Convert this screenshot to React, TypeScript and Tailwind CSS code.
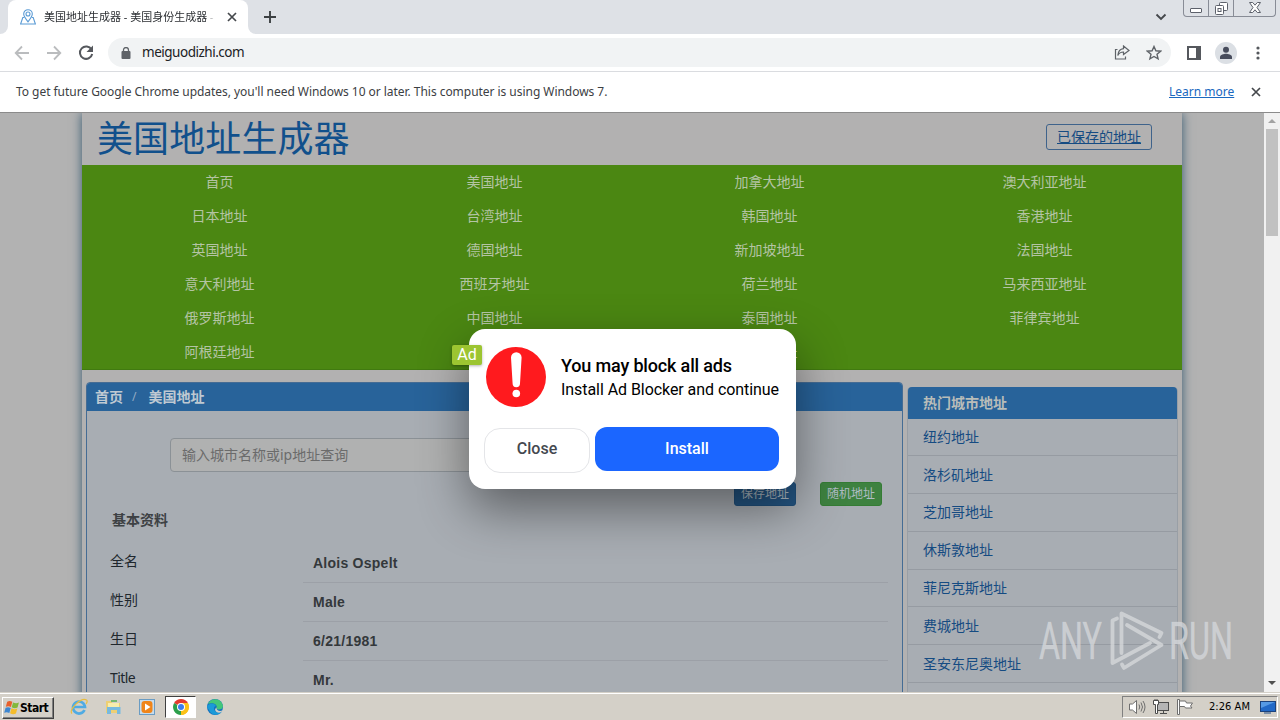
const NAV = [
  "首页", "美国地址", "加拿大地址", "澳大利亚地址",
  "日本地址", "台湾地址", "韩国地址", "香港地址",
  "英国地址", "德国地址", "新加坡地址", "法国地址",
  "意大利地址", "西班牙地址", "荷兰地址", "马来西亚地址",
  "俄罗斯地址", "中国地址", "泰国地址", "菲律宾地址",
  "阿根廷地址", "", "巴西地址",
];

const ROWS = [
  { label: "全名", value: "Alois Ospelt" },
  { label: "性别", value: "Male" },
  { label: "生日", value: "6/21/1981" },
  { label: "Title", value: "Mr." },
];

const CITIES = [
  "纽约地址",
  "洛杉矶地址",
  "芝加哥地址",
  "休斯敦地址",
  "菲尼克斯地址",
  "费城地址",
  "圣安东尼奥地址",
];

const CrossIcon = ({ className }: { className: string }) => (
  <svg className={className} viewBox="0 0 10 10" fill="none" stroke="currentColor" strokeWidth="1.7">
    <path d="M1 1l8 8M9 1l-8 8" />
  </svg>
);

const TabStrip = () => {
  return (
    <div className="flex h-[34px] shrink-0 items-start justify-between bg-[#dee1e6]">
      <div className="flex h-[34px] items-end">
        <div className="h-[34px] w-2 bg-white">
          <div className="h-full w-2 rounded-br-lg bg-[#dee1e6]" />
        </div>
        <div className="flex h-[34px] w-[240px] items-center rounded-t-lg bg-white pl-3">
          <svg className="h-4 w-4 shrink-0" viewBox="0 0 16 16" fill="none" stroke="#5b9bd5" strokeWidth="1.1">
            <path d="M4.2 8.5H2.8L.6 15h14.8l-2.2-6.500h-1.400" />
            <path d="M8 12.800C5.500 9.500 3.700 7.500 3.700 5a4.300 4.300 0 0 1 8.600 0c0 2.500-1.800 4.500-4.300 7.800z" />
            <circle cx="8" cy="5" r="2" />
          </svg>
          <span className="ml-2 w-[171px] overflow-hidden whitespace-nowrap text-[11px] leading-4 text-[#2c2f33] [mask-image:linear-gradient(to_right,black_94%,transparent)]">
            美国地址生成器 - 美国身份生成器 -
          </span>
          <CrossIcon className="ml-3 h-[10px] w-[10px] text-[#45484c]" />
        </div>
        <div className="h-[34px] w-2 bg-white">
          <div className="h-full w-2 rounded-bl-lg bg-[#dee1e6]" />
        </div>
        <svg className="mb-[11px] ml-2 h-3 w-3" viewBox="0 0 12 12" stroke="#3c4043" strokeWidth="1.900">
          <path d="M6 0v12M0 6h12" />
        </svg>
      </div>
      <div className="flex">
        <svg className="mr-4 mt-3 h-[10px] w-[12px]" viewBox="0 0 12 10" fill="none" stroke="#45484c" strokeWidth="1.900">
          <path d="M1.500 2.500L6 7l4.500-4.500" />
        </svg>
        <div className="mr-1 flex h-[17px] w-[93px] rounded-b-[4px] border border-t-0 border-[#888c96]">
          <div className="flex w-[25px] items-end justify-center border-r border-[#888c96] pb-[3px]">
            <div className="h-[5px] w-3 rounded-[1px] border border-[#5d616b] bg-white" />
          </div>
          <div className="flex w-[25px] justify-center border-r border-[#888c96] pt-[2px]">
            <svg className="h-[13px] w-[13px]" viewBox="0 0 13 13" fill="#fff" stroke="#5d616b">
              <rect x="4.500" y=".5" width="8" height="8" rx="1" />
              <rect x=".5" y="3.500" width="8" height="9" rx="1" />
              <rect x="3" y="6.500" width="3" height="3" />
            </svg>
          </div>
          <div className="flex flex-1 justify-center pt-[2px]">
            <svg className="h-[11px] w-[12px]" viewBox="0 0 12 11" fill="#fff" stroke="#5d616b">
              <path d="M.5.500h3.200L6 3.200 8.300.500h3.200L8 5.500l3.500 5H8.300L6 7.800l-2.300 2.700H.500L4 5.500z" />
            </svg>
          </div>
        </div>
      </div>
    </div>
  );
};

const Toolbar = () => {
  return (
    <div className="flex h-[38px] shrink-0 items-center border-b border-[#dadce0] bg-white pl-[14px] text-[#5f6368]">
      <svg className="h-4 w-4" viewBox="0 0 16 16" fill="none" stroke="#babcbe" strokeWidth="1.800">
        <path d="M15 8H2M8 1.500L1.700 8 8 14.500" />
      </svg>
      <svg className="ml-4 h-4 w-4" viewBox="0 0 16 16" fill="none" stroke="#babcbe" strokeWidth="1.800">
        <path d="M1 8h13M8 1.500L14.300 8 8 14.500" />
      </svg>
      <svg className="ml-4 h-4 w-4" viewBox="0 0 16 16" fill="none" stroke="#55585d" strokeWidth="2">
        <path d="M13.500 4.500A6.200 6.200 0 1 0 14.200 9" />
        <path d="M15 0.500V7H8.500z" fill="#55585d" stroke="none" />
      </svg>
      <div className="ml-[14px] flex h-[29px] w-[1063px] items-center rounded-full bg-[#f1f3f4] pl-[13px] pr-[9px]">
        <svg className="h-3 w-[10px]" viewBox="0 0 10 12">
          <rect x="0.500" y="4" width="9" height="8" rx="1" fill="#5f6368" />
          <path d="M2.500 4.500V3a2.500 2.500 0 0 1 5 0v1.500" fill="none" stroke="#5f6368" strokeWidth="1.300" />
        </svg>
        <span className="ml-[11px] whitespace-nowrap text-[13.5px] tracking-[-0.48px] text-[#202124]">
          meiguodizhi.com
        </span>
        <svg className="ml-auto h-[15px] w-4" viewBox="0 0 16 15" fill="none" stroke="#5f6368" strokeWidth="1.200">
          <path d="M3.500 4.500H1.500v9.500h10v-2.500" />
          <path d="M9.500 1l5.500 4.500-5.500 4V7C7 7 5 8 3.800 10.500 4.200 6.500 6 4 9.500 3.700z" />
        </svg>
        <svg className="ml-4 h-4 w-4" viewBox="0 0 16 16" fill="none" stroke="#5f6368" strokeWidth="1.400">
          <path d="M8 1.500l1.900 4.300 4.700.4-3.600 3.100 1.100 4.600L8 11.500l-4.100 2.400L5 9.300 1.400 6.200l4.700-.4z" />
        </svg>
      </div>
      <svg className="ml-4 h-[14px] w-[14px]" viewBox="0 0 14 14">
        <rect x="1" y="1" width="12" height="12" fill="none" stroke="#55585d" strokeWidth="2" />
        <rect x="9" y="1" width="5" height="12" fill="#55585d" />
      </svg>
      <svg className="ml-[14px] h-[22px] w-[22px]" viewBox="0 0 22 22">
        <circle cx="11" cy="11" r="11" fill="#dbdfe4" />
        <circle cx="11" cy="7.800" r="3" fill="#474c5c" />
        <path d="M5 17v-2c0-2.300 4-3.200 6-3.200s6 .9 6 3.200v2z" fill="#474c5c" />
      </svg>
      <svg className="ml-[19px] h-[14px] w-1" viewBox="0 0 4 14" fill="#55585d">
        <circle cx="2" cy="2" r="1.600" />
        <circle cx="2" cy="7" r="1.600" />
        <circle cx="2" cy="12" r="1.600" />
      </svg>
    </div>
  );
};

const InfoBar = () => {
  return (
    <div className="flex h-[41px] shrink-0 items-center justify-between border-b border-[#8b8b8b] bg-white pl-4 pr-[19px] text-xs text-[#3c4043]">
      <span className="whitespace-nowrap tracking-[-0.04px]">
        To get future Google Chrome updates, you'll need Windows 10 or later. This computer is using Windows 7.
      </span>
      <div className="flex items-center gap-5">
        <span className="w-[62px] whitespace-nowrap text-[#1a68c0] underline">Learn more</span>
        <CrossIcon className="h-[10px] w-[10px] text-[#45484c]" />
      </div>
    </div>
  );
};

const AddressPanel = () => {
  return (
    <div className="mt-3 h-[400px] w-[817px] rounded-t border border-[#456c94] bg-[#a8adb3]">
      <div className="flex h-[28px] items-center rounded-t-[3px] bg-[#28639a] pl-2 text-sm font-bold text-[#bfc9d2]">
        <span>首页</span>
        <span className="ml-[9px] text-xs font-normal text-[#93abc4]">/</span>
        <span className="ml-3">美国地址</span>
      </div>
      <div className="ml-[83px] mt-[27px] flex h-[34px] w-[560px] items-center rounded border border-[#8b9196] bg-[#b0b1b1] pl-[11px] text-sm text-[#6b6b6b]">
        输入城市名称或ip地址查询
      </div>
      <div className="ml-[647px] mt-[10px] flex gap-6 text-xs text-[#b0bcc5]">
        <div className="flex h-6 w-[62px] items-center justify-center rounded-[3px] border border-[#20507c] bg-[#245684]">
          保存地址
        </div>
        <div className="flex h-6 w-[62px] items-center justify-center rounded-[3px] border border-[#357c35] bg-[#3e8240]">
          随机地址
        </div>
      </div>
      <div className="ml-[25px] mt-1 text-sm font-bold text-[#3d4144]">基本资料</div>
      <div className="ml-[23px] mr-[14px] mt-[14px]">
        {ROWS.map((row) => (
          <div key={row.label} className="flex h-[39px] text-sm">
            <div className={`w-[193px] pt-[7px] text-[#20272d] ${row.label === "Title" ? "tracking-[-0.6px]" : ""}`}>
              {row.label}
            </div>
            <div className="flex-1 border-b border-[#9ca0a7] pl-[10px] pt-[9px] font-['Liberation_Sans',sans-serif] font-bold tracking-[0.25px] text-[#34383b]">
              {row.value}
            </div>
          </div>
        ))}
      </div>
    </div>
  );
};

const CityPanel = () => {
  return (
    <div className="mt-[17px] h-[400px] w-[271px] rounded-t border border-[#999fa6] bg-[#a8adb3]">
      <div className="-mt-px flex h-[31.5px] items-center rounded-t bg-[#28639a] pl-[15px] text-sm font-bold text-[#b9bdb9]">
        热门城市地址
      </div>
      {CITIES.map((city) => (
        <div key={city} className="flex h-[37.8px] items-center border-b border-[#969ba2] pl-[15px] text-sm text-[#154b82]">
          {city}
        </div>
      ))}
    </div>
  );
};

const Page = () => {
  return (
    <div className="flex h-[579px] shrink-0 overflow-hidden bg-[#b2b2b2]">
      <div className="flex flex-1 overflow-hidden pl-[82px]">
        <div className="h-[600px] w-[1100px] bg-[#b2b1b1] shadow-[0_0_10px_#365a72]">
          <div className="flex h-[52px] items-center justify-between pl-[15px] pr-[30px]">
            <h1 className="text-[36px] leading-[52px] tracking-[0.1px] text-[#11508c]">美国地址生成器</h1>
            <span className="mb-1 flex h-[26px] w-[106px] items-center justify-center rounded-[3px] border border-[#3f638b] text-sm text-[#154b82] underline">
              已保存的地址
            </span>
          </div>
          <div className="grid h-[205px] auto-rows-[34px] grid-cols-4 border-b border-[#417a10] bg-[#4b8712]">
            {NAV.map((item, i) => (
              <span key={i} className="text-center text-sm leading-[34px] text-[#b4c4a4]">
                {item}
              </span>
            ))}
          </div>
          <div className="flex gap-1 pl-1">
            <AddressPanel />
            <CityPanel />
          </div>
        </div>
      </div>
      <div className="flex w-4 flex-col items-center bg-[#f1f1f1]">
        <div className="flex h-4 items-center">
          <div className="border-x-4 border-b-4 border-x-transparent border-b-[#a3a3a3]" />
        </div>
        <div className="h-[107px] w-3 bg-[#c1c1c1]" />
        <div className="mt-auto flex h-[18px] items-center">
          <div className="border-x-4 border-t-4 border-x-transparent border-t-[#505050]" />
        </div>
      </div>
    </div>
  );
};

const Modal = () => {
  return (
    <div className="absolute left-[469px] top-[329px] h-[160px] w-[327px] rounded-2xl bg-white font-['Roboto',sans-serif] shadow-[0_20px_50px_rgba(0,0,0,0.45)]">
      <span className="absolute -left-[17px] top-4 flex h-5 w-[30px] items-center justify-center rounded-[2px] bg-[#9cc531] text-base text-white shadow-[0_1px_3px_rgba(0,0,0,0.3)]">
        Ad
      </span>
      <div className="flex items-center pl-[17px] pt-[18px]">
        <svg className="h-[60px] w-[60px]" viewBox="0 0 60 60">
          <circle cx="30" cy="30" r="30" fill="#ff1a1e" />
          <path d="M25 10.500a5 5 0 0 1 10.600 0L34 36.500a3.700 3.700 0 0 1-7.400 0z" fill="#fff" />
          <circle cx="30.300" cy="46.500" r="3.800" fill="#fff" />
        </svg>
        <div className="ml-[15px] mt-[2px] whitespace-nowrap text-black">
          <p className="text-lg font-medium leading-6 tracking-[-0.16px]">You may block all ads</p>
          <p className="text-base leading-6 tracking-[-0.06px]">Install Ad Blocker and continue</p>
        </div>
      </div>
      <div className="mt-5 flex gap-[5px] pl-[15px] text-base font-medium">
        <button className="mt-px h-[45px] w-[106px] rounded-2xl border border-[#e4e5e8] pb-[3px] text-[#44484f]">
          Close
        </button>
        <button className="h-11 w-[184px] rounded-xl bg-[#1b66ff] text-white">Install</button>
      </div>
    </div>
  );
};

const Watermark = () => {
  return (
    <svg className="absolute left-[1036px] top-[606px] h-[70px] w-[200px] overflow-visible" viewBox="0 0 200 70">
      <g fill="#d4d7da" fillOpacity=".8" stroke="#d4d7da" strokeOpacity=".5" strokeWidth=".6" fontFamily="Roboto, sans-serif" fontSize="51">
        <text x="3" y="53" textLength="63" lengthAdjust="spacingAndGlyphs">ANY</text>
        <text x="133" y="53" textLength="64" lengthAdjust="spacingAndGlyphs">RUN</text>
      </g>
      <g fill="none" stroke="#d4d7da" strokeOpacity=".8" strokeWidth="3.800" strokeLinejoin="round" strokeLinecap="round">
        <path d="M85.500 47V7.500L125.500 27l-2 4" />
        <path d="M81 12.500l-4.500 2V57L114 37" />
        <path d="M91 19l34.500 20L88 62l-2-3.500" />
      </g>
    </svg>
  );
};

const Taskbar = () => {
  return (
    <div className="flex h-7 shrink-0 items-center border-t border-[#d4d0c8] bg-[#d4d0c8] pl-[2px] shadow-[inset_0_1px_#ffffff]">
      <div className="mt-[2px] flex h-[22px] w-[52px] items-center border border-b-[#404040] border-l-white border-r-[#404040] border-t-white pl-[1px] font-['DejaVu_Sans_Condensed','DejaVu_Sans',sans-serif] text-xs font-bold text-black shadow-[inset_-1px_-1px_#808080]">
        <svg className="h-[15px] w-4 shrink-0" viewBox="0 0 15 14">
          <path d="M3 1.500c2-1 3.300-.7 4.800.2L6.500 6.500C5 5.700 3.500 5.500 1.700 6.300z" fill="#e8602c" />
          <path d="M8.500 2.200c2 1 3.500 1 5.500.1L12.700 7c-2 .9-3.500.8-5.500-.2z" fill="#83b83a" />
          <path d="M1.500 7.200c1.800-.8 3.300-.6 4.800.2L5 12.200C3.500 11.400 2 11.200.2 12z" fill="#3d86d1" />
          <path d="M7 7.800c2 1 3.500 1 5.500.1l-1.300 4.700c-2 .9-3.500.8-5.500-.2z" fill="#f4bc2b" />
        </svg>
        <span className="tracking-[-0.5px]">Start</span>
      </div>
      <svg className="ml-4 h-[18px] w-[18px]" viewBox="0 0 18 18" fill="none">
        <path d="M14.500 12a6 6 0 1 1 .5-3H4.500" stroke="#4fabe3" strokeWidth="2.700" />
        <path d="M2 15.500C-2 12 11-1 16.500 2c1 .7.500 2.500-.5 4" stroke="#e8bd3f" strokeWidth="1.200" />
      </svg>
      <svg className="ml-[17px] h-4 w-[17px]" viewBox="0 0 17 16">
        <path d="M1 2h5l1.500 2H15v10H1z" fill="#edcf74" />
        <path d="M3 4h11v5H3z" fill="#f8ecab" />
        <path d="M2 8h13.500v7H12v-4H6v4H2z" fill="#77b9df" />
        <path d="M6 1h6v2H6z" fill="#75b66f" />
      </svg>
      <svg className="ml-[17px] h-4 w-4" viewBox="0 0 16 16">
        <rect x=".5" y=".5" width="15" height="15" fill="#c7dcec" stroke="#6a9cc3" />
        <rect x="2.500" y="2" width="11" height="12" rx="3" fill="#f08519" />
        <path d="M6 4.500v7L11.500 8z" fill="#fff" />
      </svg>
      <div className="ml-[10px] mt-px flex h-[22px] w-[31px] items-center justify-center border border-b-white border-l-[#404040] border-r-white border-t-[#404040] bg-white">
        <svg className="h-4 w-4" viewBox="0 0 16 16">
          <path d="M8 8L1.100 4A8 8 0 0 1 14.900 4z" fill="#e33b2e" />
          <path d="M8 8l6.900-4A8 8 0 0 1 8 16z" fill="#fbc116" />
          <path d="M8 8v8A8 8 0 0 1 1.100 4z" fill="#2c9f4b" />
          <path d="M8 4h6.900A8 8 0 0 1 9 15.900L11.500 10z" fill="#fbc116" />
          <circle cx="8" cy="8" r="4" fill="#fff" />
          <circle cx="8" cy="8" r="3" fill="#3b7ded" />
        </svg>
      </div>
      <svg className="ml-[11px] h-4 w-4" viewBox="0 0 16 16">
        <circle cx="8" cy="8" r="8" fill="#1471bd" />
        <path d="M1 5C3-1 14-2 16 7c0 4-6 4.500-6.500 2C11 6 6 3 1 5z" fill="#43c67a" />
        <path d="M0 8c1-4 7-5 9-1-3 0-3 5 1.500 6.500 2 .5 3.500 0 4.500-1C12 17 4 17 2 11z" fill="#1b9ad8" />
        <path d="M9.500 8.500c-.5 3 3 4.200 6 3-.5 1.200-2 2.200-3.500 2.200C8 13.500 7 10 9.500 8.500z" fill="#d4d0c8" />
      </svg>
      <div className="ml-auto mr-[2px] mt-px flex h-[22px] w-[156px] items-center border border-b-white border-l-[#808080] border-r-white border-t-[#808080] pl-[6px]">
        <svg className="h-4 w-[17px]" viewBox="0 0 17 16" fill="none" stroke="#6e6e6e">
          <path d="M.500 5h3L7.500 1.500v13L3.500 11h-3z" fill="#fff" />
          <path d="M10 5.500q1.500 2.500 0 5M12 3.500q3 4.500 0 9M14 2q4 6 0 12" />
        </svg>
        <svg className="ml-[7px] h-4 w-4" viewBox="0 0 16 16" stroke="#4c4c4c">
          <rect x="4.500" y="3.500" width="11" height="8" fill="#b5b5b5" />
          <path d="M7 14.500h7M10.500 12v2" />
          <path d="M.5 1.500h5v4h-1v9h-2v-9h-2zM2 0v2M4 0v2" fill="#fff" />
        </svg>
        <svg className="ml-2 h-4 w-4" viewBox="0 0 16 16" fill="#fff" stroke="#6e6e6e">
          <path d="M.500.500h2v15h-2z" />
          <path d="M2.500 2h6l1 2h6l-2 3 1.500 2H8.500l-1-1.500h-5z" />
        </svg>
        <span className="ml-4 w-[43px] whitespace-nowrap font-['DejaVu_Sans_Condensed','DejaVu_Sans',sans-serif] text-[11px] tracking-[0.05px] text-black">
          2:26 AM
        </span>
        <svg className="ml-2 h-[13px] w-4 shrink-0" viewBox="0 0 16 13">
          <rect x=".5" y=".5" width="15" height="10" fill="#2269c7" stroke="#1c427c" />
          <path d="M1 1h14L1 7z" fill="#569ae5" />
          <rect x="4" y="11" width="7" height="2" fill="#7b8fa8" />
        </svg>
      </div>
    </div>
  );
};

export default function App() {
  return (
    <div className="relative flex h-[720px] w-[1280px] flex-col overflow-hidden bg-white font-['Noto_Sans','Noto_Sans_CJK_SC',sans-serif]">
      <TabStrip />
      <Toolbar />
      <InfoBar />
      <Page />
      <Taskbar />
      <Modal />
      <Watermark />
    </div>
  );
}
